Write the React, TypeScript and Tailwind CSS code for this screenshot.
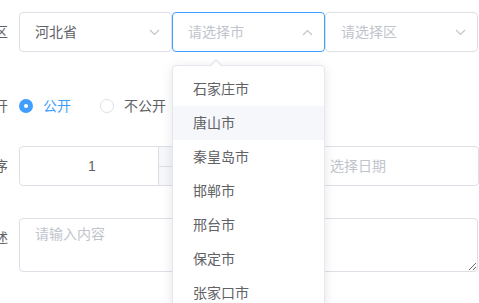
import React from "react";

const font = { fontFamily: '"Helvetica Neue", Helvetica, "Noto Sans CJK SC", "Liberation Sans", sans-serif' };

function Chevron({ up = false }: { up?: boolean }) {
  return (
    <svg width="11" height="7" viewBox="0 0 11 7" className="shrink-0">
      <polyline
        points={up ? "1,6 5.5,1.5 10,6" : "1,1 5.5,5.5 10,1"}
        fill="none"
        stroke="#c0c4cc"
        strokeWidth="1.2"
      />
    </svg>
  );
}

function Label({ text }: { text: string }) {
  return (
    <div className="w-[100px] shrink-0 text-right pr-[11px] text-[14px] leading-[40px] h-[40px] text-[#606266]">{text}</div>
  );
}

export default function App() {
  const cities = ["石家庄市", "唐山市", "秦皇岛市", "邯郸市", "邢台市", "保定市", "张家口市", "承德市"];
  return (
    <div className="relative w-[479px] h-[303px] overflow-hidden bg-white" style={font}>
      <div className="ml-[-81px] pt-[12px] flex flex-col">
        {/* Row 1 */}
        <div className="flex items-center h-[40px]">
          <Label text="所在地区" />
          <div className="flex">
            <div className="w-[153px] h-[40px] border border-[#dcdfe6] rounded-[4px] flex items-center justify-between pl-[15px] pr-[11px] text-[14px] text-[#606266]">
              <span>河北省</span>
              <Chevron />
            </div>
            <div className="w-[153px] h-[40px] border border-[#409eff] rounded-[4px] flex items-center justify-between pl-[15px] pr-[11px] text-[14px] text-[#c0c4cc]">
              <span>请选择市</span>
              <Chevron up />
            </div>
            <div className="w-[153px] h-[40px] border border-[#dcdfe6] rounded-[4px] flex items-center justify-between pl-[15px] pr-[11px] text-[14px] text-[#c0c4cc]">
              <span>请选择区</span>
              <Chevron />
            </div>
          </div>
        </div>

        {/* Row 2 */}
        <div className="flex items-center h-[40px] mt-[34px]">
          <Label text="是否公开" />
          <div className="flex items-center">
            <span className="w-[14px] h-[14px] rounded-full bg-[#409eff] flex items-center justify-center">
              <span className="w-[4px] h-[4px] rounded-full bg-white" />
            </span>
            <span className="ml-[10px] text-[14px] text-[#409eff]">公开</span>
            <span className="ml-[29px] w-[14px] h-[14px] rounded-full border border-[#dcdfe6] bg-white" />
            <span className="ml-[10px] text-[14px] text-[#606266]">不公开</span>
          </div>
        </div>

        {/* Row 3 */}
        <div className="flex items-center h-[40px] mt-[20px]">
          <Label text="排序" />
          <div className="w-[180px] h-[40px] border border-[#dcdfe6] rounded-[4px] flex overflow-hidden">
            <div className="w-[138px] pl-[6px] flex items-center justify-center text-[14px] text-[#606266]">1</div>
            <div className="flex-1 flex flex-col border-l border-[#dcdfe6] bg-[#f5f7fa]">
              <div className="flex-1 border-b border-[#dcdfe6]" />
              <div className="flex-1" />
            </div>
          </div>
          <div className="ml-[100px] w-[180px] h-[40px] border border-[#dcdfe6] rounded-[4px] flex items-center pl-[30px] text-[14px] text-[#c0c4cc]">
            选择日期
          </div>
        </div>

        {/* Row 4 */}
        <div className="flex items-start mt-[32px]">
          <Label text="描述" />
          <textarea
            placeholder="请输入内容"
            className="w-[459px] h-[54px] border border-[#dcdfe6] rounded-[4px] px-[15px] py-[5px] text-[14px] text-[#606266] placeholder:text-[#c0c4cc] outline-none"
            style={font}
          />
        </div>
      </div>

      {/* Dropdown */}
      <div className="absolute left-[172px] top-[65px] w-[153px] h-[260px] bg-white border border-[#e4e7ed] rounded-[4px] shadow-[0_2px_12px_0_rgba(0,0,0,0.1)] py-[6px]">
        <div className="absolute left-[37px] top-[-7px] w-0 h-0 border-x-[6px] border-x-transparent border-b-[6px] border-b-[#e4e7ed]" />
        <div className="absolute left-[38px] top-[-5px] w-0 h-0 border-x-[5px] border-x-transparent border-b-[5px] border-b-white" />
        {cities.map((c, i) => (
          <div
            key={c}
            className={`h-[34px] flex items-center pl-[20px] text-[14px] text-[#606266] ${i === 1 ? "bg-[#f5f7fa]" : ""}`}
          >
            {c}
          </div>
        ))}
      </div>
    </div>
  );
}
